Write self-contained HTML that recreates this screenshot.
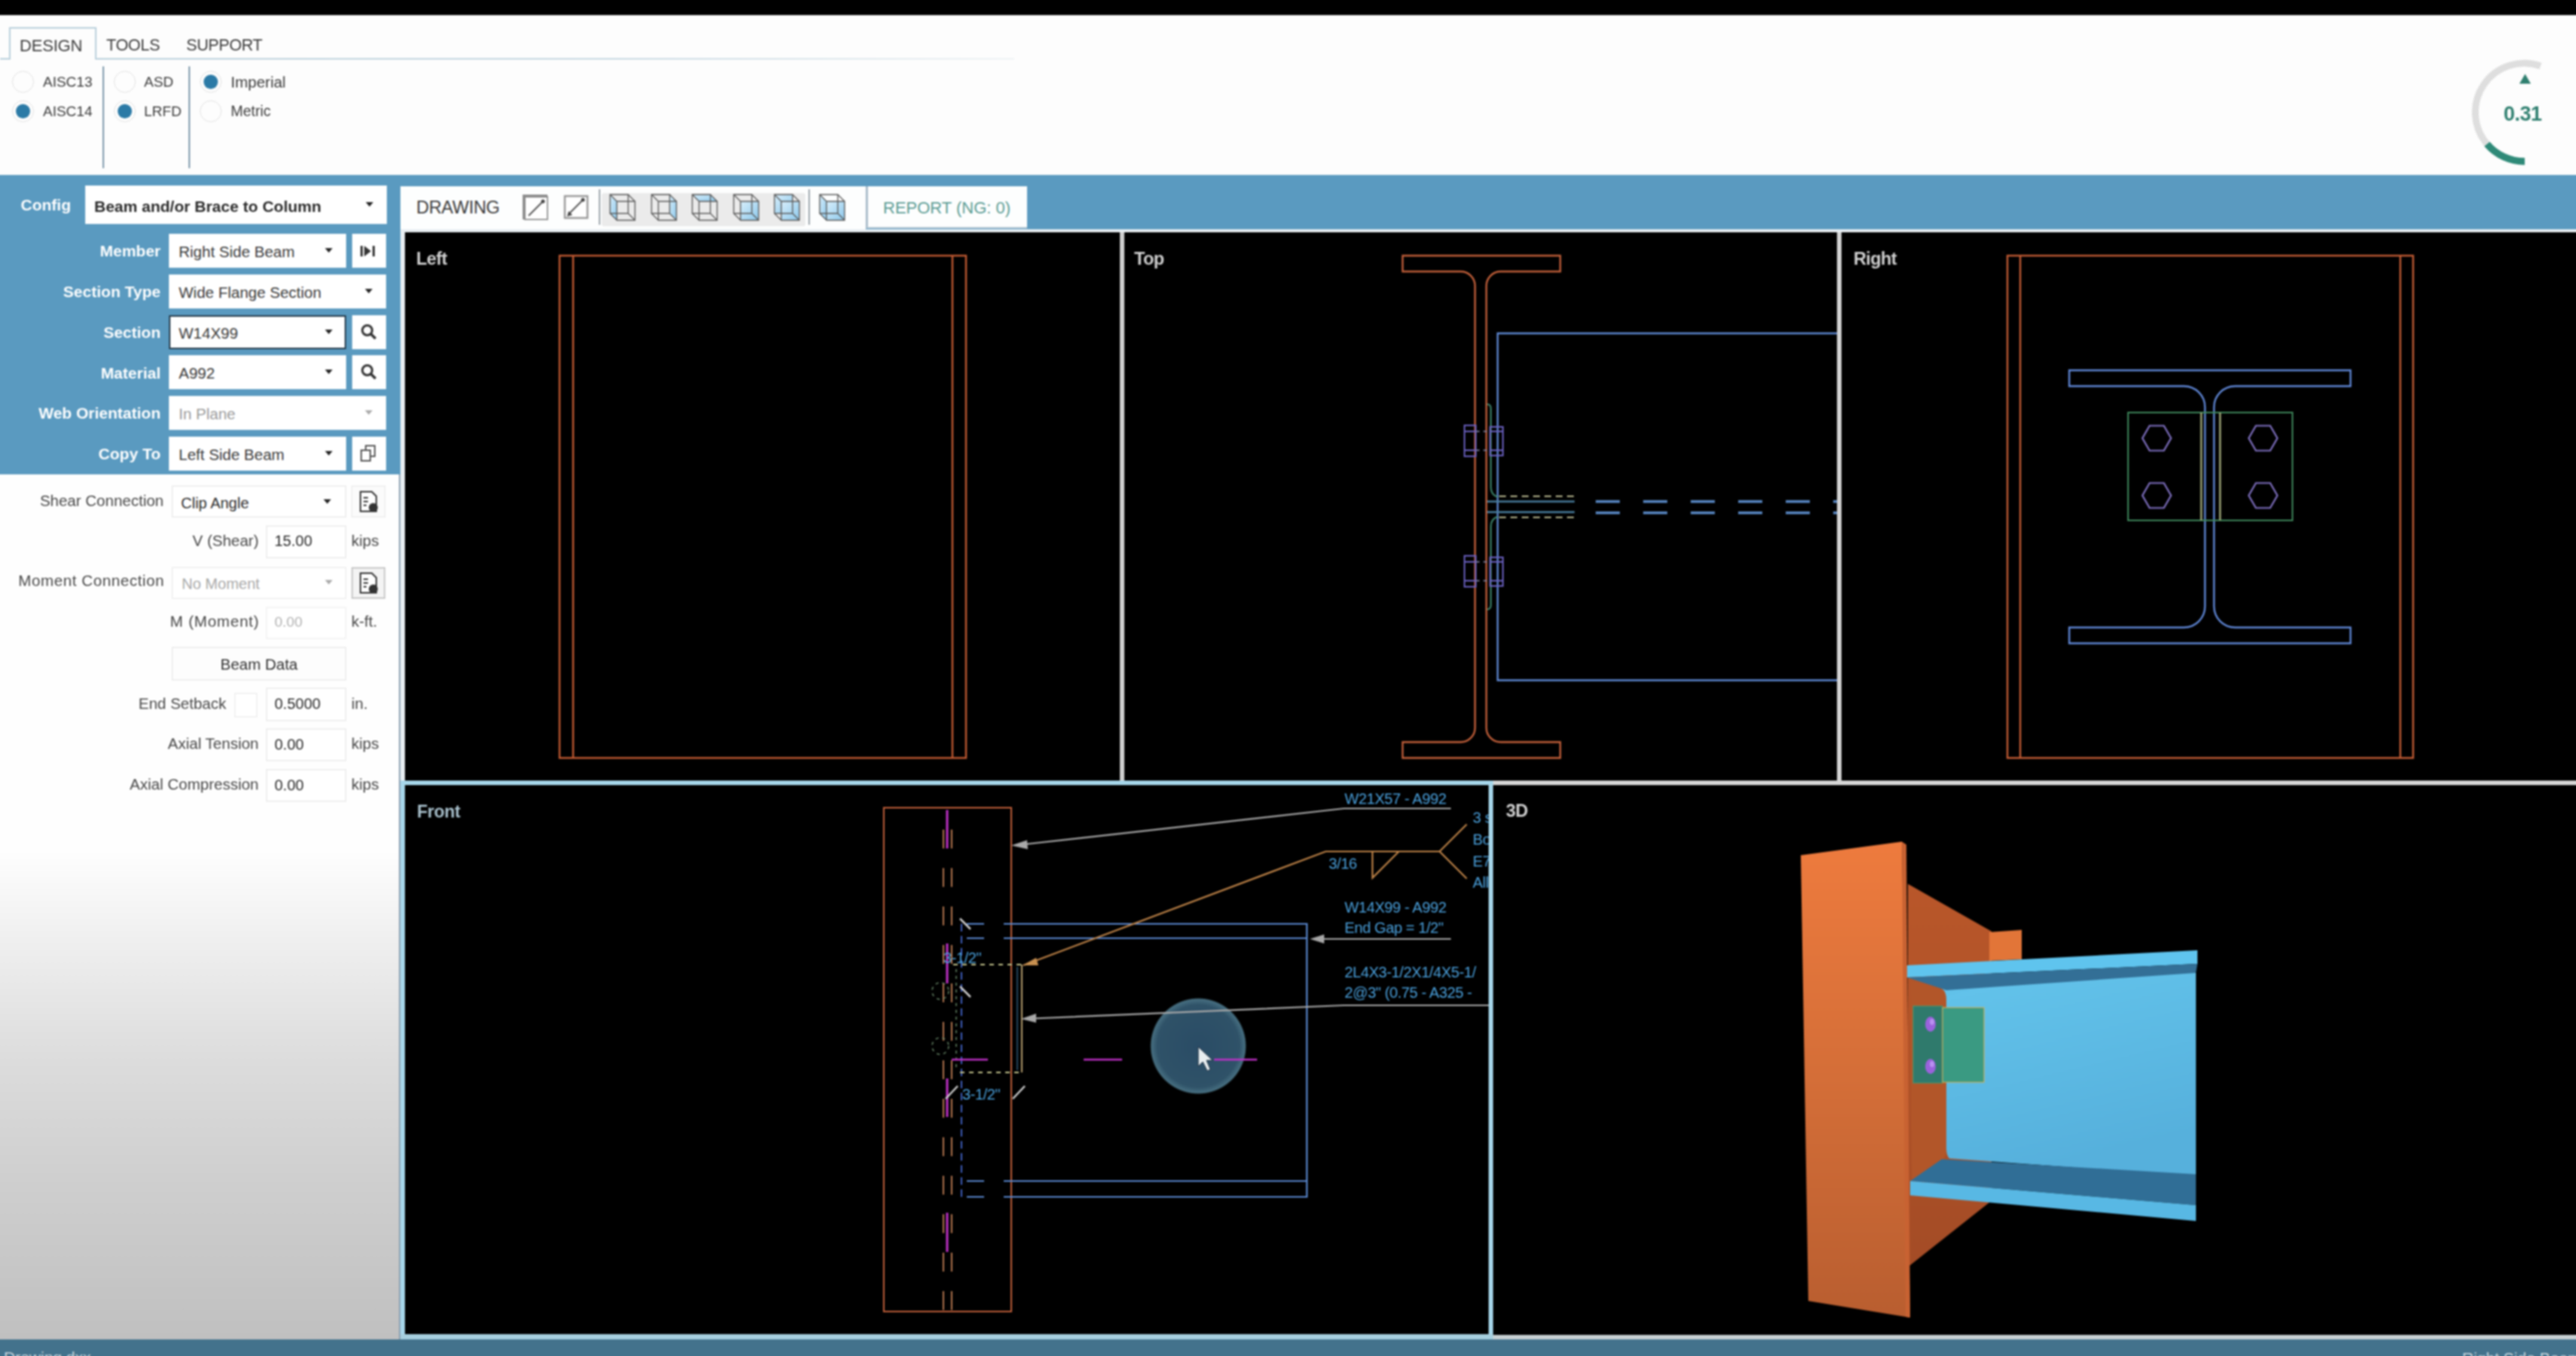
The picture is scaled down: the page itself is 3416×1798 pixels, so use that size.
<!DOCTYPE html>
<html><head><meta charset="utf-8">
<style>
*{margin:0;padding:0;box-sizing:border-box}
html,body{width:3416px;height:1798px;overflow:hidden;background:#fdfdfd;font-family:"Liberation Sans",sans-serif}
.a{position:absolute}
.t{position:absolute;white-space:nowrap;line-height:1}
.box{position:absolute;background:#fff}
.lbl{position:absolute;white-space:nowrap;line-height:1;color:#fff;font-weight:bold;font-size:21px;text-align:right}
.glbl{position:absolute;white-space:nowrap;line-height:1;color:#464646;font-size:20.5px;text-align:right}
.val{position:absolute;white-space:nowrap;line-height:1;color:#383838;font-size:20px}
.dd{position:absolute;width:0;height:0;border-left:5px solid transparent;border-right:5px solid transparent;border-top:6px solid #222}
.vl{position:absolute;white-space:nowrap;line-height:1;color:#f0f0f0;font-size:23px}
#root{position:absolute;left:0;top:0;width:3416px;height:1798px;filter:blur(0.8px)}
</style></head><body><div id="root">
<!-- top black bar -->
<div class="a" style="left:-12px;top:-12px;width:3440px;height:32px;background:#000"></div>

<!-- HEADER -->
<div id="header">
  <!-- tab underline -->
  <div class="a" style="left:0;top:77px;width:1345px;height:2px;background:linear-gradient(90deg,#b8cfdb 0%,#c6d8e2 60%,#f0f4f6 100%)"></div>
  <!-- DESIGN tab box -->
  <div class="a" style="left:12px;top:36px;width:116px;height:43px;border:2px solid #b8cfdb;border-bottom:none;background:#fdfdfd"></div>
  <div class="t" style="left:26px;top:50px;font-size:22px;color:#3c3c3c;letter-spacing:-0.2px">DESIGN</div>
  <div class="t" style="left:141px;top:50px;font-size:21.5px;color:#3c3c3c;letter-spacing:-0.3px">TOOLS</div>
  <div class="t" style="left:247px;top:50px;font-size:21.5px;color:#3c3c3c;letter-spacing:-0.4px">SUPPORT</div>
  <!-- radio separators -->
  <div class="a" style="left:136px;top:88px;width:2px;height:135px;background:#7b97aa"></div>
  <div class="a" style="left:250px;top:88px;width:2px;height:135px;background:#7b97aa"></div>
  <!-- radios -->
  <div class="a" style="left:16px;top:94px;width:29px;height:29px;border-radius:50%;border:1.5px solid #e2e2e2"></div>
  <div class="a" style="left:16px;top:133px;width:29px;height:29px;border-radius:50%;border:1.5px solid #e2e2e2"></div>
  <div class="a" style="left:21px;top:138px;width:19px;height:19px;border-radius:50%;background:#2b7aa6"></div>
  <div class="a" style="left:151px;top:94px;width:29px;height:29px;border-radius:50%;border:1.5px solid #e2e2e2"></div>
  <div class="a" style="left:151px;top:133px;width:29px;height:29px;border-radius:50%;border:1.5px solid #e2e2e2"></div>
  <div class="a" style="left:156px;top:138px;width:19px;height:19px;border-radius:50%;background:#2b7aa6"></div>
  <div class="a" style="left:265px;top:94px;width:29px;height:29px;border-radius:50%;border:1.5px solid #e2e2e2"></div>
  <div class="a" style="left:270px;top:99px;width:19px;height:19px;border-radius:50%;background:#2b7aa6"></div>
  <div class="a" style="left:265px;top:133px;width:29px;height:29px;border-radius:50%;border:1.5px solid #e2e2e2"></div>
  <div class="t" style="left:57px;top:99px;font-size:19px;color:#3a3a3a">AISC13</div>
  <div class="t" style="left:57px;top:138px;font-size:19px;color:#3a3a3a">AISC14</div>
  <div class="t" style="left:191px;top:99px;font-size:19px;color:#3a3a3a">ASD</div>
  <div class="t" style="left:191px;top:138px;font-size:19px;color:#3a3a3a">LRFD</div>
  <div class="t" style="left:306px;top:99px;font-size:20.5px;color:#3a3a3a">Imperial</div>
  <div class="t" style="left:306px;top:138px;font-size:19.5px;color:#3a3a3a">Metric</div>
  <!-- gauge -->
  <svg class="a" style="left:3260px;top:60px" width="180" height="180" viewBox="3260 60 180 180">
    <path d="M 3369 87.5 A 65 65 0 0 0 3298 191" fill="none" stroke="#dedede" stroke-width="9"/>
    <path d="M 3298 191 A 65 65 0 0 0 3348 214" fill="none" stroke="#2f8a78" stroke-width="9.5"/>
    <polygon points="3341,111 3356,111 3348.5,98" fill="#2f7f6f"/>
  </svg>
  <div class="t" style="left:3320px;top:138px;font-size:27px;font-weight:bold;color:#2f7f6f;letter-spacing:-0.5px">0.31</div>
</div>

<!-- blue band -->
<div class="a" style="left:-12px;top:232px;width:3440px;height:72px;background:#5a9ac0"></div>
<!-- left panel blue -->
<div class="a" style="left:-12px;top:232px;width:543px;height:397px;background:#5a9ac0"></div>
<!-- BLUE FORM -->
<div id="blueform">
  <div class="lbl" style="left:0;width:94px;top:261px">Config</div>
  <div class="box" style="left:113px;top:246px;width:400px;height:51px"></div>
  <div class="t" style="left:125px;top:263px;font-size:21px;font-weight:bold;color:#2a2a2a">Beam and/or Brace to Column</div>
  <div class="dd" style="left:485px;top:268px"></div>

  <div class="lbl" style="left:0;width:213px;top:322px">Member</div>
  <div class="box" style="left:224px;top:310px;width:235px;height:45px"></div>
  <div class="val" style="left:237px;top:324px;font-size:20.5px">Right Side Beam</div>
  <div class="dd" style="left:431px;top:329px"></div>
  <div class="box" style="left:467px;top:310px;width:45px;height:45px"></div>
  <svg class="a" style="left:467px;top:310px" width="45" height="45" viewBox="0 0 45 45"><rect x="11" y="16" width="3" height="14" fill="#333"/><polygon points="16,16 16,30 25,23" fill="#333"/><rect x="27" y="16" width="3" height="14" fill="#333"/></svg>

  <div class="lbl" style="left:0;width:213px;top:376px">Section Type</div>
  <div class="box" style="left:224px;top:364px;width:288px;height:45px"></div>
  <div class="val" style="left:237px;top:378px;font-size:20.5px">Wide Flange Section</div>
  <div class="dd" style="left:484px;top:383px"></div>

  <div class="lbl" style="left:0;width:213px;top:430px">Section</div>
  <div class="box" style="left:224px;top:418px;width:235px;height:45px;border:2px solid #233a4a"></div>
  <div class="val" style="left:237px;top:432px;font-size:20.5px">W14X99</div>
  <div class="dd" style="left:431px;top:437px"></div>
  <div class="box" style="left:467px;top:418px;width:45px;height:45px"></div>
  <svg class="a" style="left:467px;top:418px" width="45" height="45" viewBox="0 0 45 45"><circle cx="20" cy="20" r="6.5" fill="none" stroke="#333" stroke-width="3"/><line x1="24.5" y1="24.5" x2="31" y2="31" stroke="#333" stroke-width="3.5"/></svg>

  <div class="lbl" style="left:0;width:213px;top:484px">Material</div>
  <div class="box" style="left:224px;top:471px;width:235px;height:45px"></div>
  <div class="val" style="left:237px;top:485px;font-size:20.5px">A992</div>
  <div class="dd" style="left:431px;top:490px"></div>
  <div class="box" style="left:467px;top:471px;width:45px;height:45px"></div>
  <svg class="a" style="left:467px;top:471px" width="45" height="45" viewBox="0 0 45 45"><circle cx="20" cy="20" r="6.5" fill="none" stroke="#333" stroke-width="3"/><line x1="24.5" y1="24.5" x2="31" y2="31" stroke="#333" stroke-width="3.5"/></svg>

  <div class="lbl" style="left:0;width:213px;top:537px">Web Orientation</div>
  <div class="box" style="left:224px;top:525px;width:288px;height:45px"></div>
  <div class="val" style="left:237px;top:539px;font-size:20.5px;color:#9a9a9a">In Plane</div>
  <div class="dd" style="left:484px;top:544px;border-top-color:#aaa"></div>

  <div class="lbl" style="left:0;width:213px;top:591px">Copy To</div>
  <div class="box" style="left:224px;top:579px;width:235px;height:45px"></div>
  <div class="val" style="left:237px;top:593px;font-size:20.5px">Left Side Beam</div>
  <div class="dd" style="left:431px;top:598px"></div>
  <div class="box" style="left:467px;top:579px;width:45px;height:45px"></div>
  <svg class="a" style="left:467px;top:579px" width="45" height="45" viewBox="0 0 45 45"><rect x="18" y="12" width="12" height="14" fill="#fff" stroke="#555" stroke-width="2"/><rect x="12" y="18" width="12" height="14" fill="#fff" stroke="#555" stroke-width="2"/></svg>
</div>

<!-- left panel lower gradient -->
<div class="a" style="left:-12px;top:629px;width:541px;height:1148px;background:linear-gradient(#fefefe 0px,#fefefe 500px,#efefef 620px,#dcdcdc 780px,#cfcfcf 934px,#c4c4c4 1089px,#c0c0c0 1148px)"></div>
<div class="a" style="left:529px;top:629px;width:2px;height:1148px;background:#8a9fb0"></div>
<!-- GREY FORM -->
<div id="greyform">
  <div class="glbl" style="left:0;width:217px;top:654px">Shear Connection</div>
  <div class="a" style="left:228px;top:644px;width:231px;height:42px;border:1.5px solid #e1e1e1;background:#fff"></div>
  <div class="val" style="left:240px;top:657px;font-size:20px;color:#2a2a2a">Clip Angle</div>
  <div class="dd" style="left:429px;top:662px"></div>
  <div class="a" style="left:466px;top:644px;width:45px;height:42px;border:1.5px solid #e6e6e6;background:#fbfbfb"></div>
  <svg class="a" style="left:466px;top:644px" width="45" height="42" viewBox="0 0 45 42"><path d="M12 8 H27 L33 14 V34 H12 Z" fill="#fff" stroke="#333" stroke-width="2"/><line x1="16" y1="16" x2="22" y2="16" stroke="#333" stroke-width="2"/><line x1="16" y1="21" x2="22" y2="21" stroke="#333" stroke-width="2"/><line x1="16" y1="26" x2="20" y2="26" stroke="#333" stroke-width="2"/><circle cx="29" cy="29" r="6" fill="#333"/></svg>

  <div class="glbl" style="left:0;width:343px;top:707px">V (Shear)</div>
  <div class="a" style="left:353px;top:697px;width:106px;height:43px;border:1.5px solid #e1e1e1;background:#fff"></div>
  <div class="val" style="left:364px;top:707px;font-size:20px;color:#2a2a2a">15.00</div>
  <div class="glbl" style="left:466px;top:707px;text-align:left">kips</div>

  <div class="glbl" style="left:0;width:218px;top:760px;letter-spacing:0.6px">Moment Connection</div>
  <div class="a" style="left:228px;top:752px;width:231px;height:42px;border:1.5px solid #e6e6e6;background:#fff"></div>
  <div class="val" style="left:241px;top:764px;font-size:20px;color:#a8a8a8">No Moment</div>
  <div class="dd" style="left:431px;top:769px;border-top-color:#aaa"></div>
  <div class="a" style="left:466px;top:752px;width:45px;height:42px;border:2px solid #c8c8c8;background:#f4f4f4"></div>
  <svg class="a" style="left:466px;top:752px" width="45" height="42" viewBox="0 0 45 42"><path d="M12 8 H27 L33 14 V34 H12 Z" fill="#fff" stroke="#333" stroke-width="2"/><line x1="16" y1="16" x2="22" y2="16" stroke="#333" stroke-width="2"/><line x1="16" y1="21" x2="22" y2="21" stroke="#333" stroke-width="2"/><line x1="16" y1="26" x2="20" y2="26" stroke="#333" stroke-width="2"/><circle cx="29" cy="29" r="6" fill="#333"/></svg>

  <div class="glbl" style="left:0;width:344px;top:814px;letter-spacing:0.8px">M (Moment)</div>
  <div class="a" style="left:353px;top:805px;width:106px;height:42px;border:1.5px solid #eaeaea;background:#fff"></div>
  <div class="val" style="left:364px;top:815px;font-size:19px;color:#b0b0b0">0.00</div>
  <div class="glbl" style="left:466px;top:814px;text-align:left">k-ft.</div>

  <div class="a" style="left:228px;top:858px;width:231px;height:44px;border:1.5px solid #e1e1e1;background:#fdfdfd"></div>
  <div class="glbl" style="left:228px;width:231px;top:871px;text-align:center;color:#2f2f2f">Beam Data</div>

  <div class="glbl" style="left:0;width:300px;top:923px">End Setback</div>
  <div class="a" style="left:311px;top:919px;width:30px;height:32px;border:1.5px solid #e6e6e6;background:#fff"></div>
  <div class="a" style="left:353px;top:912px;width:106px;height:44px;border:1.5px solid #e1e1e1;background:#fff"></div>
  <div class="val" style="left:364px;top:923px;font-size:20px;color:#2a2a2a">0.5000</div>
  <div class="glbl" style="left:466px;top:923px;text-align:left">in.</div>

  <div class="glbl" style="left:0;width:343px;top:976px">Axial Tension</div>
  <div class="a" style="left:353px;top:966px;width:106px;height:43px;border:1.5px solid #e1e1e1;background:#fff"></div>
  <div class="val" style="left:364px;top:977px;font-size:20px;color:#2a2a2a">0.00</div>
  <div class="glbl" style="left:466px;top:976px;text-align:left">kips</div>

  <div class="glbl" style="left:0;width:343px;top:1030px">Axial Compression</div>
  <div class="a" style="left:353px;top:1020px;width:106px;height:43px;border:1.5px solid #e1e1e1;background:#fff"></div>
  <div class="val" style="left:364px;top:1031px;font-size:20px;color:#2a2a2a">0.00</div>
  <div class="glbl" style="left:466px;top:1030px;text-align:left">kips</div>
</div>

<!-- drawing area border -->
<div class="a" style="left:531px;top:304px;width:2897px;height:1473px;background:#e8eef2"></div>
<div class="a" style="left:537px;top:308px;width:2891px;height:1462px;background:#000"></div>
<!-- view separators -->
<div class="a" style="left:1485px;top:308px;width:6px;height:727px;background:#cfcfcf"></div>
<div class="a" style="left:2436px;top:308px;width:6px;height:727px;background:#d4d4d4"></div>
<div class="a" style="left:1980px;top:1035px;width:1448px;height:6px;background:#d6d6d6"></div>
<div class="a" style="left:3416px;top:1035px;width:0;height:6px;background:#d6d6d6"></div>
<!-- front view light blue border -->
<div class="a" style="left:531px;top:1035px;width:1449px;height:6px;background:#a6d6ea"></div>
<div class="a" style="left:531px;top:1035px;width:6px;height:741px;background:#a6d6ea"></div>
<div class="a" style="left:1974px;top:1035px;width:6px;height:741px;background:#a6d6ea"></div>
<div class="a" style="left:531px;top:1769px;width:1449px;height:7px;background:#a6cfdf"></div>
<div class="a" style="left:1980px;top:1770px;width:1448px;height:6px;background:#c8d0d4"></div>

<!-- DRAWINGS -->
<svg class="a" style="left:0;top:0" width="3416" height="1798" viewBox="0 0 3416 1798">
  <g font-family="Liberation Sans" font-size="23.5" font-weight="bold" fill="#d2d2d2" letter-spacing="-0.6">
    <text x="552" y="351">Left</text>
    <text x="1504" y="351">Top</text>
    <text x="2458" y="351">Right</text>
    <text x="553" y="1084" fill="#a8c0cc" font-size="23" letter-spacing="-0.3">Front</text>
    <text x="1997" y="1083">3D</text>
  </g>
  <!-- LEFT VIEW -->
  <g fill="none" stroke="#c25a32" stroke-width="2.4">
    <rect x="742" y="339" width="539" height="666"/>
    <line x1="760" y1="339" x2="760" y2="1005"/>
    <line x1="1263" y1="339" x2="1263" y2="1005"/>
  </g>
  <!-- TOP VIEW -->
  <g fill="none" stroke-width="2.4">
    <path stroke="#c4603a" d="M1860 339 H2069 V360 H1990 A19 19 0 0 0 1971 379 V965 A19 19 0 0 0 1990 984 H2069 V1005 H1860 V984 H1937 A19 19 0 0 0 1956 965 V379 A19 19 0 0 0 1937 360 H1860 Z"/>
    <path stroke="#5f8ad6" d="M2436 442 H1986 V902 H2436"/>
    <!-- clip angles -->
    <path stroke="#3f8a70" stroke-width="2" d="M1972 536 Q1977 536 1977 542 V646 Q1977 656 1986 659 M1986 685 Q1977 688 1977 698 V802 Q1977 808 1972 808"/>
    <!-- bolts -->
    <g stroke="#6a60c0" stroke-width="2">
      <rect x="1942" y="564" width="15" height="41"/><line x1="1942" y1="572" x2="1957" y2="572"/><line x1="1942" y1="597" x2="1957" y2="597"/>
      <rect x="1976" y="566" width="17" height="38"/><line x1="1976" y1="572" x2="1993" y2="572"/><line x1="1976" y1="597" x2="1993" y2="597"/>
      <rect x="1942" y="737" width="15" height="41"/><line x1="1942" y1="745" x2="1957" y2="745"/><line x1="1942" y1="770" x2="1957" y2="770"/>
      <rect x="1976" y="739" width="17" height="38"/><line x1="1976" y1="745" x2="1993" y2="745"/><line x1="1976" y1="770" x2="1993" y2="770"/>
    </g>
    <g stroke="#8a8ab0" stroke-width="1.5" stroke-dasharray="5 5">
      <line x1="1957" y1="572" x2="1976" y2="572"/><line x1="1957" y1="597" x2="1976" y2="597"/>
      <line x1="1957" y1="745" x2="1976" y2="745"/><line x1="1957" y1="770" x2="1976" y2="770"/>
    </g>
    <!-- web of beam dashed -->
    <g stroke="#5a8ac8" stroke-width="3.5" stroke-dasharray="32 31">
      <line x1="2116" y1="665" x2="2436" y2="665"/>
      <line x1="2116" y1="680" x2="2436" y2="680"/>
    </g>
    <g stroke="#b8b890" stroke-width="2" stroke-dasharray="9 6">
      <line x1="1988" y1="658" x2="2088" y2="658"/>
      <line x1="1988" y1="686" x2="2088" y2="686"/>
    </g>
    <g stroke="#4a80a0" stroke-width="2.5">
      <line x1="1972" y1="665" x2="2088" y2="665"/>
      <line x1="1972" y1="679" x2="2088" y2="679"/>
    </g>
  </g>
  <!-- RIGHT VIEW -->
  <g fill="none" stroke-width="2.4">
    <g stroke="#c45c34" stroke-width="2.4">
      <rect x="2662" y="339" width="538" height="666"/>
      <line x1="2679" y1="339" x2="2679" y2="1005"/>
      <line x1="3183" y1="339" x2="3183" y2="1005"/>
    </g>
    <path stroke="#6088d8" d="M2744 491 H3117 V512 H2964 A28 28 0 0 0 2936 540 V804 A28 28 0 0 0 2964 832 H3117 V853 H2744 V832 H2896 A28 28 0 0 0 2924 804 V540 A28 28 0 0 0 2896 512 H2744 Z"/>
    <rect stroke="#3f8a5c" stroke-width="2" x="2822" y="547" width="218" height="143"/>
    <g stroke="#a0a878" stroke-width="2.5"><line x1="2919" y1="547" x2="2919" y2="690"/><line x1="2944" y1="547" x2="2944" y2="690"/></g>
    <g stroke="#8474c8" stroke-width="2.2">
      <polygon points="2841,581 2850.5,564.5 2869.5,564.5 2879,581 2869.5,597.5 2850.5,597.5"/>
      <polygon points="2982,581 2991.5,564.5 3010.5,564.5 3020,581 3010.5,597.5 2991.5,597.5"/>
      <polygon points="2841,657 2850.5,640.5 2869.5,640.5 2879,657 2869.5,673.5 2850.5,673.5"/>
      <polygon points="2982,657 2991.5,640.5 3010.5,640.5 3020,657 3010.5,673.5 2991.5,673.5"/>
    </g>
  </g>

  <!-- FRONT VIEW -->
  <defs><clipPath id="fclip"><rect x="537" y="1041" width="1437" height="728"/></clipPath>
    <radialGradient id="cur" cx="0.5" cy="0.5" r="0.5">
      <stop offset="0" stop-color="#2a4c66"/><stop offset="0.85" stop-color="#2f5268"/><stop offset="0.97" stop-color="#466e80"/><stop offset="1" stop-color="#466e80" stop-opacity="0"/>
    </radialGradient>
  </defs>
  <g clip-path="url(#fclip)">
  <circle cx="1589" cy="1387" r="64" fill="url(#cur)"/>
  <g fill="none" stroke-width="2">
    <rect stroke="#c4603a" x="1172" y="1071" width="169" height="668"/>
    <!-- column dashed web lines -->
    <g stroke="#b87850" stroke-width="2" stroke-dasharray="25 26" stroke-dashoffset="0">
      <line x1="1251" y1="1100" x2="1251" y2="1739"/>
      <line x1="1262" y1="1100" x2="1262" y2="1739"/>
    </g>
    <g stroke="#c030c8" stroke-width="3">
      <line x1="1256" y1="1074" x2="1256" y2="1125"/>
      <line x1="1256" y1="1251" x2="1256" y2="1304"/>
      <line x1="1256" y1="1430" x2="1256" y2="1481"/>
      <line x1="1256" y1="1608" x2="1256" y2="1660"/>
    </g>
    <!-- beam -->
    <g stroke="#5a88d0" stroke-width="2.2">
      <path d="M1331 1225 H1733 V1587 H1331 M1331 1244 H1733 M1331 1566 H1733"/>
      <path d="M1282 1225 H1305 M1282 1244 H1305 M1282 1566 H1305 M1282 1587 H1305"/>
    </g>
    <line stroke="#4060c0" stroke-width="2" stroke-dasharray="10 6" x1="1275" y1="1225" x2="1275" y2="1587"/>
    <!-- clip angle -->
    <path stroke="#b8a070" stroke-width="2" d="M1355 1279 V1422"/>
    <line stroke="#306080" stroke-width="1.5" x1="1349" y1="1282" x2="1349" y2="1419"/>
    <g stroke="#c8c890" stroke-width="2" stroke-dasharray="6 6">
      <line x1="1264" y1="1279" x2="1355" y2="1279"/>
      <line x1="1273" y1="1422" x2="1355" y2="1422"/>
    </g>
    <g stroke="#6a8a6a" stroke-width="1.5" stroke-dasharray="4 5">
      <line x1="1268" y1="1285" x2="1268" y2="1420"/>
      <circle cx="1247" cy="1314" r="11"/><circle cx="1247" cy="1387" r="11"/>
    </g>
    <!-- magenta lines -->
    <g stroke="#c030c8" stroke-width="2.5">
      <line x1="1262" y1="1405" x2="1310" y2="1405"/>
      <line x1="1437" y1="1405" x2="1488" y2="1405"/>
      <line x1="1610" y1="1405" x2="1667" y2="1405"/>
    </g>
    <!-- ticks -->
    <g stroke="#d0d0d0" stroke-width="2.5">
      <line x1="1273" y1="1218" x2="1287" y2="1232"/>
      <line x1="1273" y1="1308" x2="1287" y2="1322"/>
      <line x1="1254" y1="1457" x2="1270" y2="1440"/>
      <line x1="1343" y1="1457" x2="1359" y2="1440"/>
    </g>
    <!-- leaders -->
    <g stroke="#a8a8a8" stroke-width="2.2">
      <path d="M1924 1072 H1782 L1345 1121"/>
      <path d="M1924 1245 H1745"/>
      <path d="M1975 1333 H1782 L1358 1351"/>
    </g>
    <g fill="#a8a8a8" stroke="none">
      <polygon points="1341,1121 1362,1114 1363,1126"/>
      <polygon points="1737,1245 1756,1239 1756,1251"/>
      <polygon points="1354,1351 1374,1344 1374,1356"/>
    </g>
    <g stroke="#c08448" stroke-width="2.2">
      <path d="M1357 1280 L1758 1129 H1909 L1945 1093 M1909 1129 L1945 1165 M1820 1129 V1164 L1855 1129"/>
    </g>
    <polygon fill="#c89050" stroke="none" points="1356,1280 1374,1270 1377,1280"/>
  </g>
  <g font-family="Liberation Sans" font-size="20" fill="#4aa0dc" letter-spacing="-0.4">
    <text x="1783" y="1066">W21X57 - A992</text>
    <text x="1762" y="1152">3/16</text>
    <text x="1953" y="1091">3 s</text>
    <text x="1953" y="1120">Bo</text>
    <text x="1953" y="1149">E7</text>
    <text x="1953" y="1177">All</text>
    <text x="1783" y="1210">W14X99 - A992</text>
    <text x="1783" y="1237">End Gap = 1/2"</text>
    <text x="1783" y="1296">2L4X3-1/2X1/4X5-1/</text>
    <text x="1783" y="1323">2@3" (0.75 - A325 - </text>
    <text x="1251" y="1277">3-1/2"</text>
    <text x="1276" y="1458">3-1/2"</text>
  </g>
  <!-- cursor -->
  <polygon points="1589,1388 1589,1414 1595,1408 1601,1420 1605,1418 1600,1406 1608,1406" fill="#e8eef0" stroke="#203040" stroke-width="1"/>
  </g>

  <!-- 3D VIEW -->
  <defs>
    <linearGradient id="or1" x1="0" y1="0" x2="0" y2="1"><stop offset="0" stop-color="#ee7b3e"/><stop offset="0.5" stop-color="#d46e38"/><stop offset="1" stop-color="#b95e30"/></linearGradient>
    <linearGradient id="or2" x1="0" y1="0" x2="0" y2="1"><stop offset="0" stop-color="#b9572a"/><stop offset="1" stop-color="#a44c26"/></linearGradient>
    <linearGradient id="bl1" x1="0" y1="0" x2="0.3" y2="1"><stop offset="0" stop-color="#5cbce6"/><stop offset="0.12" stop-color="#62c2ea"/><stop offset="1" stop-color="#56b0dc"/></linearGradient>
  </defs>
  <polygon points="2530,1172 2641,1235 2641,1592 2530,1680" fill="url(#or2)"/>
  <polygon points="2638,1236 2681,1233 2681,1272 2638,1274" fill="#e27538"/>
  <polygon points="2388,1134 2522,1116 2533,1747 2398,1725" fill="url(#or1)"/>
  <polygon points="2522,1116 2528,1120 2533,1747 2527,1746" fill="#c86232"/>
  <!-- beam web -->
  <path d="M2533 1300 L2572 1310 Q2581 1314 2581 1326 V1522 Q2581 1538 2570 1544 L2535 1566 Z" fill="#b25629"/>
  <path d="M2575 1311 L2912 1289 V1560 L2585 1536 Q2581 1532 2581 1522 V1326 Q2581 1314 2575 1311 Z" fill="url(#bl1)"/>
  <!-- top flange -->
  <polygon points="2529,1280 2914,1260 2914,1278 2529,1296" fill="#5fc4ee"/>
  <polygon points="2529,1296 2914,1278 2912,1290 2581,1313 2572,1310" fill="#336f96"/>
  <!-- bottom flange -->
  <polygon points="2533,1566 2575,1537 2912,1557 2912,1598" fill="#306e96"/>
  <polygon points="2533,1566 2912,1598 2912,1619 2533,1585" fill="#58b8e4"/>
  <!-- clip angle -->
  <rect x="2537" y="1334" width="39" height="102" fill="#2f7a6c" stroke="#4a9a70" stroke-width="1"/>
  <rect x="2576" y="1336" width="55" height="99" fill="#3a9a82" stroke="#c8b060" stroke-width="1.2"/>
  <ellipse cx="2560" cy="1358" rx="7" ry="10" fill="#9a62dc"/><ellipse cx="2562" cy="1355" rx="3" ry="4" fill="#b890f0"/>
  <ellipse cx="2560" cy="1414" rx="7" ry="10" fill="#9a62dc"/><ellipse cx="2562" cy="1411" rx="3" ry="4" fill="#b890f0"/>
</svg>

<!-- TOOLBAR -->
<div id="toolbar">
  <div class="a" style="left:531px;top:247px;width:617px;height:57px;background:#fdfefe"></div>
  <div class="t" style="left:552px;top:264px;font-size:23.5px;color:#3a3a3a;letter-spacing:-0.3px">DRAWING</div>
  <svg class="a" style="left:690px;top:252px" width="100" height="48" viewBox="690 252 100 48">
    <rect x="696" y="261" width="30" height="30" fill="#fff" stroke="#9a9a9a" stroke-width="2"/>
    <path d="M695 291 V260 H726" fill="none" stroke="#8c8c8c" stroke-width="4"/>
    <line x1="701" y1="286" x2="720" y2="267" stroke="#555" stroke-width="2"/>
    <circle cx="720" cy="267" r="2.5" fill="#444"/>
    <rect x="749" y="260" width="30" height="29" fill="#fff" stroke="#9a9a9a" stroke-width="2.5"/>
    <line x1="754" y1="284" x2="773" y2="265" stroke="#555" stroke-width="2"/>
    <circle cx="773" cy="265" r="2.5" fill="#444"/>
    <polygon points="752,287 759,285 754,280" fill="#444"/>
  </svg>
  <div class="a" style="left:794px;top:251px;width:2px;height:47px;background:#9aa4aa"></div>
  <div class="a" style="left:798px;top:256px;width:270px;height:44px;background:#ebebeb;border-radius:3px"></div>
  <div class="a" style="left:1072px;top:251px;width:2px;height:47px;background:#9aa4aa"></div>
  <svg class="a" style="left:800px;top:252px" width="330" height="48" viewBox="800 252 330 48">
    <defs>
      <linearGradient id="cb" x1="0" y1="0" x2="1" y2="1"><stop offset="0" stop-color="#d8eefa"/><stop offset="1" stop-color="#8cc8ec"/></linearGradient>
    </defs>
    <g transform="translate(809,258)">
      <polygon points="0,0 9,9 9,34 0,25" fill="url(#cb)"/>
      <path d="M0 0 H24 V25 H0 Z M9 9 H33 V34 H9 Z M0 0 L9 9 M24 0 L33 9 M0 25 L9 34 M24 25 L33 34" fill="none" stroke="#5a5a5a" stroke-width="1.4"/>
    </g>
    <g transform="translate(864,258)">
      <polygon points="24,0 33,9 33,34 24,25" fill="url(#cb)"/>
      <path d="M0 0 H24 V25 H0 Z M9 9 H33 V34 H9 Z M0 0 L9 9 M24 0 L33 9 M0 25 L9 34 M24 25 L33 34" fill="none" stroke="#5a5a5a" stroke-width="1.4"/>
    </g>
    <g transform="translate(918,258)">
      <polygon points="0,0 24,0 33,9 9,9" fill="url(#cb)"/>
      <path d="M0 0 H24 V25 H0 Z M9 9 H33 V34 H9 Z M0 0 L9 9 M24 0 L33 9 M0 25 L9 34 M24 25 L33 34" fill="none" stroke="#5a5a5a" stroke-width="1.4"/>
    </g>
    <g transform="translate(973,258)">
      <polygon points="9,9 33,9 33,34 9,34" fill="url(#cb)"/>
      <path d="M0 0 H24 V25 H0 Z M9 9 H33 V34 H9 Z M0 0 L9 9 M24 0 L33 9 M0 25 L9 34 M24 25 L33 34" fill="none" stroke="#5a5a5a" stroke-width="1.4"/>
    </g>
    <g transform="translate(1027,258)">
      <polygon points="0,0 24,0 24,25 0,25" fill="url(#cb)"/>
      <polygon points="9,9 33,9 33,34 9,34" fill="url(#cb)"/>
      <path d="M0 0 H24 V25 H0 Z M9 9 H33 V34 H9 Z M0 0 L9 9 M24 0 L33 9 M0 25 L9 34 M24 25 L33 34" fill="none" stroke="#5a5a5a" stroke-width="1.4"/>
    </g>
    <g transform="translate(1087,258)">
      <polygon points="0,0 9,9 9,34 0,25" fill="url(#cb)"/>
      <polygon points="9,9 33,9 33,34 9,34" fill="url(#cb)"/>
      <path d="M0 0 H24 V25 H0 Z M9 9 H33 V34 H9 Z M0 0 L9 9 M24 0 L33 9 M0 25 L9 34 M24 25 L33 34" fill="none" stroke="#5a5a5a" stroke-width="1.4"/>
    </g>
  </svg>
  <!-- REPORT tab -->
  <div class="a" style="left:1148px;top:247px;width:214px;height:56px;background:#fdfefe;border-left:3px solid #a9bccb;border-bottom:2px solid #b6c8d4"></div>
  <div class="t" style="left:1171px;top:265px;font-size:22px;color:#5a9b93;letter-spacing:0px">REPORT (NG: 0)</div>
</div>

<!-- status bar -->
<div class="a" style="left:-12px;top:1776px;width:3440px;height:34px;background:#43728c;overflow:hidden">
  <div class="t" style="left:17px;top:13px;font-size:21px;color:#c8d6de">Drawing.dxx</div>
  <div class="t" style="left:3277px;top:14px;font-size:21px;color:#c8d6de;clip-path:inset(0 0 12px 0)">Right Side Beam</div>
</div>

</div></body></html>
